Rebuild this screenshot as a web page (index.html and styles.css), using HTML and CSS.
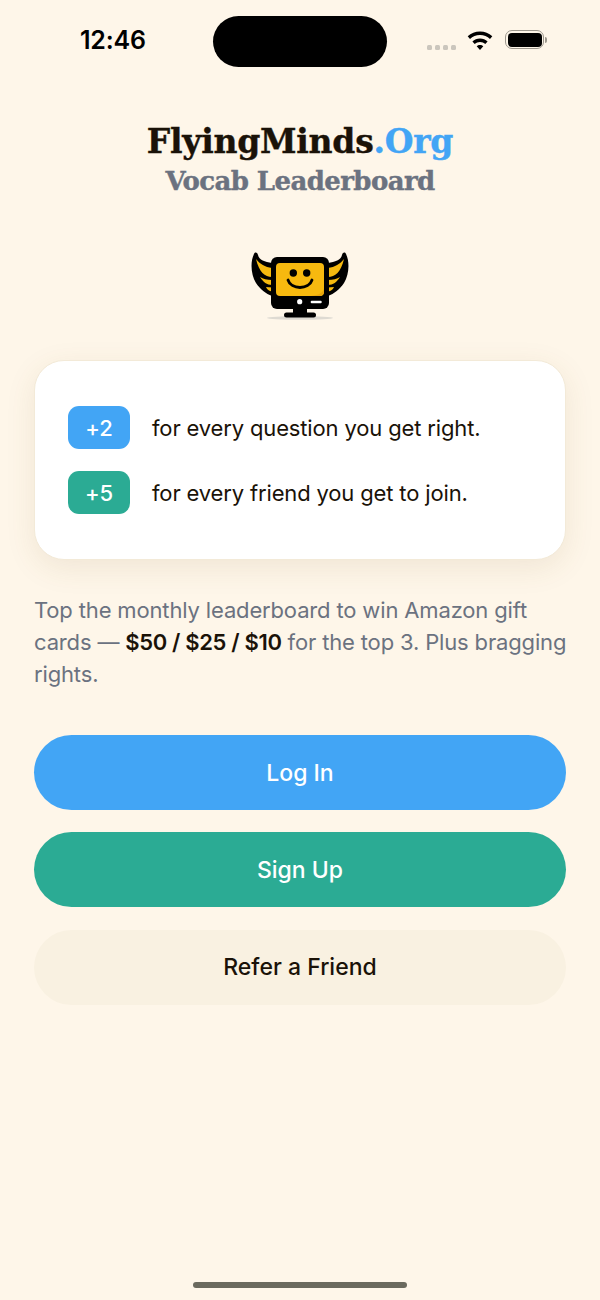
FILE: index.html
```html
<!DOCTYPE html>
<html>

<head>
  <title>FlyingMinds.Org Vocab Leaderboard</title>
  <meta name="viewport" content="width=device-width, initial-scale=1.0">
  <link rel="stylesheet" href="styles.css">
</head>

<body>
  <div class="phone">
    <div class="status-bar">
      <span class="time">12:46</span>
      <div class="island"></div>
      <div class="status-icons">
        <div class="signal"><i></i><i></i><i></i><i></i></div>
        <svg class="wifi" width="28" height="20" viewBox="0 0 28 20">
          <path d="M14 1.500c-4.700 0-9 1.800-12.300 4.800l2.300 2.600c2.600-2.400 6.200-3.900 10-3.900s7.400 1.500 10 3.900l2.300-2.600C23 3.300 18.700 1.500 14 1.500z" fill="#000" />
          <path d="M14 8.500c-2.900 0-5.600 1.100-7.600 3l2.300 2.600c1.400-1.300 3.300-2.100 5.300-2.100s3.900.8 5.300 2.100l2.300-2.600c-2-1.900-4.700-3-7.600-3z" fill="#000" />
          <path d="M14 15c-1.300 0-2.400.5-3.300 1.300l3.300 3.700 3.300-3.700c-.9-.8-2-1.300-3.300-1.300z" fill="#000" />
        </svg>
        <div class="battery"><div class="battery-fill"></div></div>
        <div class="battery-cap"></div>
      </div>
    </div>

    <div class="title">
      <h1>FlyingMinds<span class="blue">.Org</span></h1>
      <h2>Vocab Leaderboard</h2>
    </div>

    <svg class="logo" width="100" height="70" viewBox="0 0 100 70">
      <ellipse cx="50" cy="67" rx="33" ry="1.800" fill="#dedad2" />
      <g id="wing">
        <path d="M4 3C0 11 1 24 6 32c4 6 10 11 16 13V12C15 11 9 9 8 4 7 1 5 1 4 3z" fill="#000" />
        <path d="M6 8c4 5 9 8 16 9v9c-7 0-13-5-16-18z" fill="#f5b90f" />
        <path d="M10 26c3 2 7 3 12 3v5c-5 0-9-3-12-8z" fill="#f5b90f" />
        <path d="M16 36l6 .5v4c-3-.5-5-2-6-4.500z" fill="#f5b90f" />
      </g>
      <use href="#wing" transform="matrix(-1 0 0 1 100 0)" />
      <rect x="21" y="6" width="58" height="52" rx="6" fill="#000" />
      <rect x="26" y="12" width="48" height="33" rx="4" fill="#f7b90f" />
      <path d="M74 38v3c0 2-2 4-4 4H58c8 0 14-2 16-7z" fill="#e8a50c" />
      <circle cx="43.300" cy="22" r="3.700" fill="#000" />
      <circle cx="56.700" cy="22" r="3.700" fill="#000" />
      <path d="M38 29c3 10 21 10 24 0" fill="none" stroke="#000" stroke-width="2.800" stroke-linecap="round" />
      <circle cx="49.700" cy="50.700" r="2.600" fill="#fff" />
      <rect x="60.700" y="49.700" width="11" height="2.600" rx="1" fill="#fff" />
      <rect x="43" y="57" width="14" height="6" fill="#000" />
      <rect x="34" y="61.500" width="32" height="5" rx="2.500" fill="#000" />
    </svg>

    <div class="card">
      <div class="card-row">
        <span class="badge badge-blue">+2</span>
        <span>for every question you get right.</span>
      </div>
      <div class="card-row">
        <span class="badge badge-green">+5</span>
        <span>for every friend you get to join.</span>
      </div>
    </div>

    <p class="blurb">Top the monthly leaderboard to win Amazon gift cards — <b>$50 / $25 / $10</b> for the top 3. Plus bragging rights.</p>

    <div class="buttons">
      <button class="btn btn-blue">Log In</button>
      <button class="btn btn-green">Sign Up</button>
      <button class="btn btn-plain">Refer a Friend</button>
    </div>

    <div class="home-bar"></div>
  </div>
</body>

</html>
```
FILE: styles.css
```css
body {
  margin: 0;
  background-color: #fef6e9;
  font-family: "Inter", "Noto Sans", sans-serif;
  color: #1a1208;
}

.phone {
  width: 600px;
  height: 1300px;
  display: flex;
  flex-direction: column;
  align-items: center;
  overflow: hidden;
}

.status-bar {
  width: 100%;
  box-sizing: border-box;
  padding: 16px 53px 0 80px;
  display: flex;
  align-items: flex-start;
}

.time {
  margin-top: 9px;
  font-size: 25px;
  line-height: 30px;
  font-weight: 600;
  letter-spacing: -0.2px;
  color: #000;
  width: 133px;
}

.island {
  width: 174px;
  height: 51px;
  border-radius: 26px;
  background-color: #000;
}

.status-icons {
  margin-top: 13px;
  flex: 1;
  display: flex;
  align-items: center;
  justify-content: flex-end;
}

.signal {
  display: flex;
  gap: 3px;
  margin: 16px 10px 0 0;
}

.signal i {
  width: 5px;
  height: 5px;
  border-radius: 1.500px;
  background-color: #cbc6bd;
}

.wifi {
  margin-right: 11px;
}

.battery {
  width: 39px;
  height: 19px;
  box-sizing: border-box;
  border: 1.500px solid #9c978d;
  border-radius: 7px;
  padding: 1.500px;
}

.battery-fill {
  height: 100%;
  border-radius: 4px;
  background-color: #000;
}

.battery-cap {
  width: 2px;
  height: 6px;
  margin-left: 1px;
  border-radius: 0 2px 2px 0;
  background-color: #9c978d;
}

.title {
  margin-top: 52px;
  text-align: center;
  font-family: "DejaVu Serif", "Liberation Serif", serif;
  font-weight: 700;
  -webkit-text-stroke: 0.4px;
}

h1 {
  margin: 0;
  font-size: 33px;
  line-height: 46px;
  letter-spacing: -0.25px;
  color: #1a1208;
}

h2 {
  margin: 0;
  font-size: 26px;
  line-height: 32px;
  letter-spacing: -0.6px;
  color: #6b7280;
}

.blue {
  color: #42a5f5;
}

.logo {
  margin-top: 54px;
}

.card {
  margin-top: 39px;
  width: 532px;
  height: 200px;
  box-sizing: border-box;
  padding: 45px 33px;
  background-color: #fff;
  border: 1px solid #f3ead8;
  border-radius: 30px;
  box-shadow: 0 8px 30px rgba(120, 90, 40, 0.1);
  display: flex;
  flex-direction: column;
  gap: 22px;
  font-size: 22px;
  letter-spacing: -0.15px;
}

.card-row {
  display: flex;
  align-items: center;
  gap: 22px;
}

.badge {
  width: 62px;
  height: 43px;
  border-radius: 11px;
  color: #fff;
  font-weight: 500;
  display: flex;
  align-items: center;
  justify-content: center;
}

.badge-blue {
  background-color: #42a5f5;
}

.badge-green {
  background-color: #2bab94;
}

.blurb {
  margin: 34px -4px 0 0;
  width: 536px;
  font-size: 22px;
  line-height: 32px;
  letter-spacing: -0.15px;
  color: #6b7280;
}

.blurb b {
  color: #1a1208;
  font-weight: 600;
  letter-spacing: -0.35px;
}

.buttons {
  margin-top: 45px;
  width: 532px;
  display: flex;
  flex-direction: column;
  gap: 22.400px;
}

.btn {
  height: 75px;
  border: none;
  border-radius: 38px;
  font-family: inherit;
  font-size: 23px;
  font-weight: 550;
  color: #fff;
}

.btn-blue {
  background-color: #42a5f5;
}

.btn-green {
  background-color: #2bab94;
}

.btn-plain {
  background-color: #f9f1e1;
  color: #1a1208;
}

.home-bar {
  margin-top: auto;
  margin-bottom: 12px;
  width: 214px;
  height: 6px;
  border-radius: 3px;
  background-color: #6b6a5e;
}
```
